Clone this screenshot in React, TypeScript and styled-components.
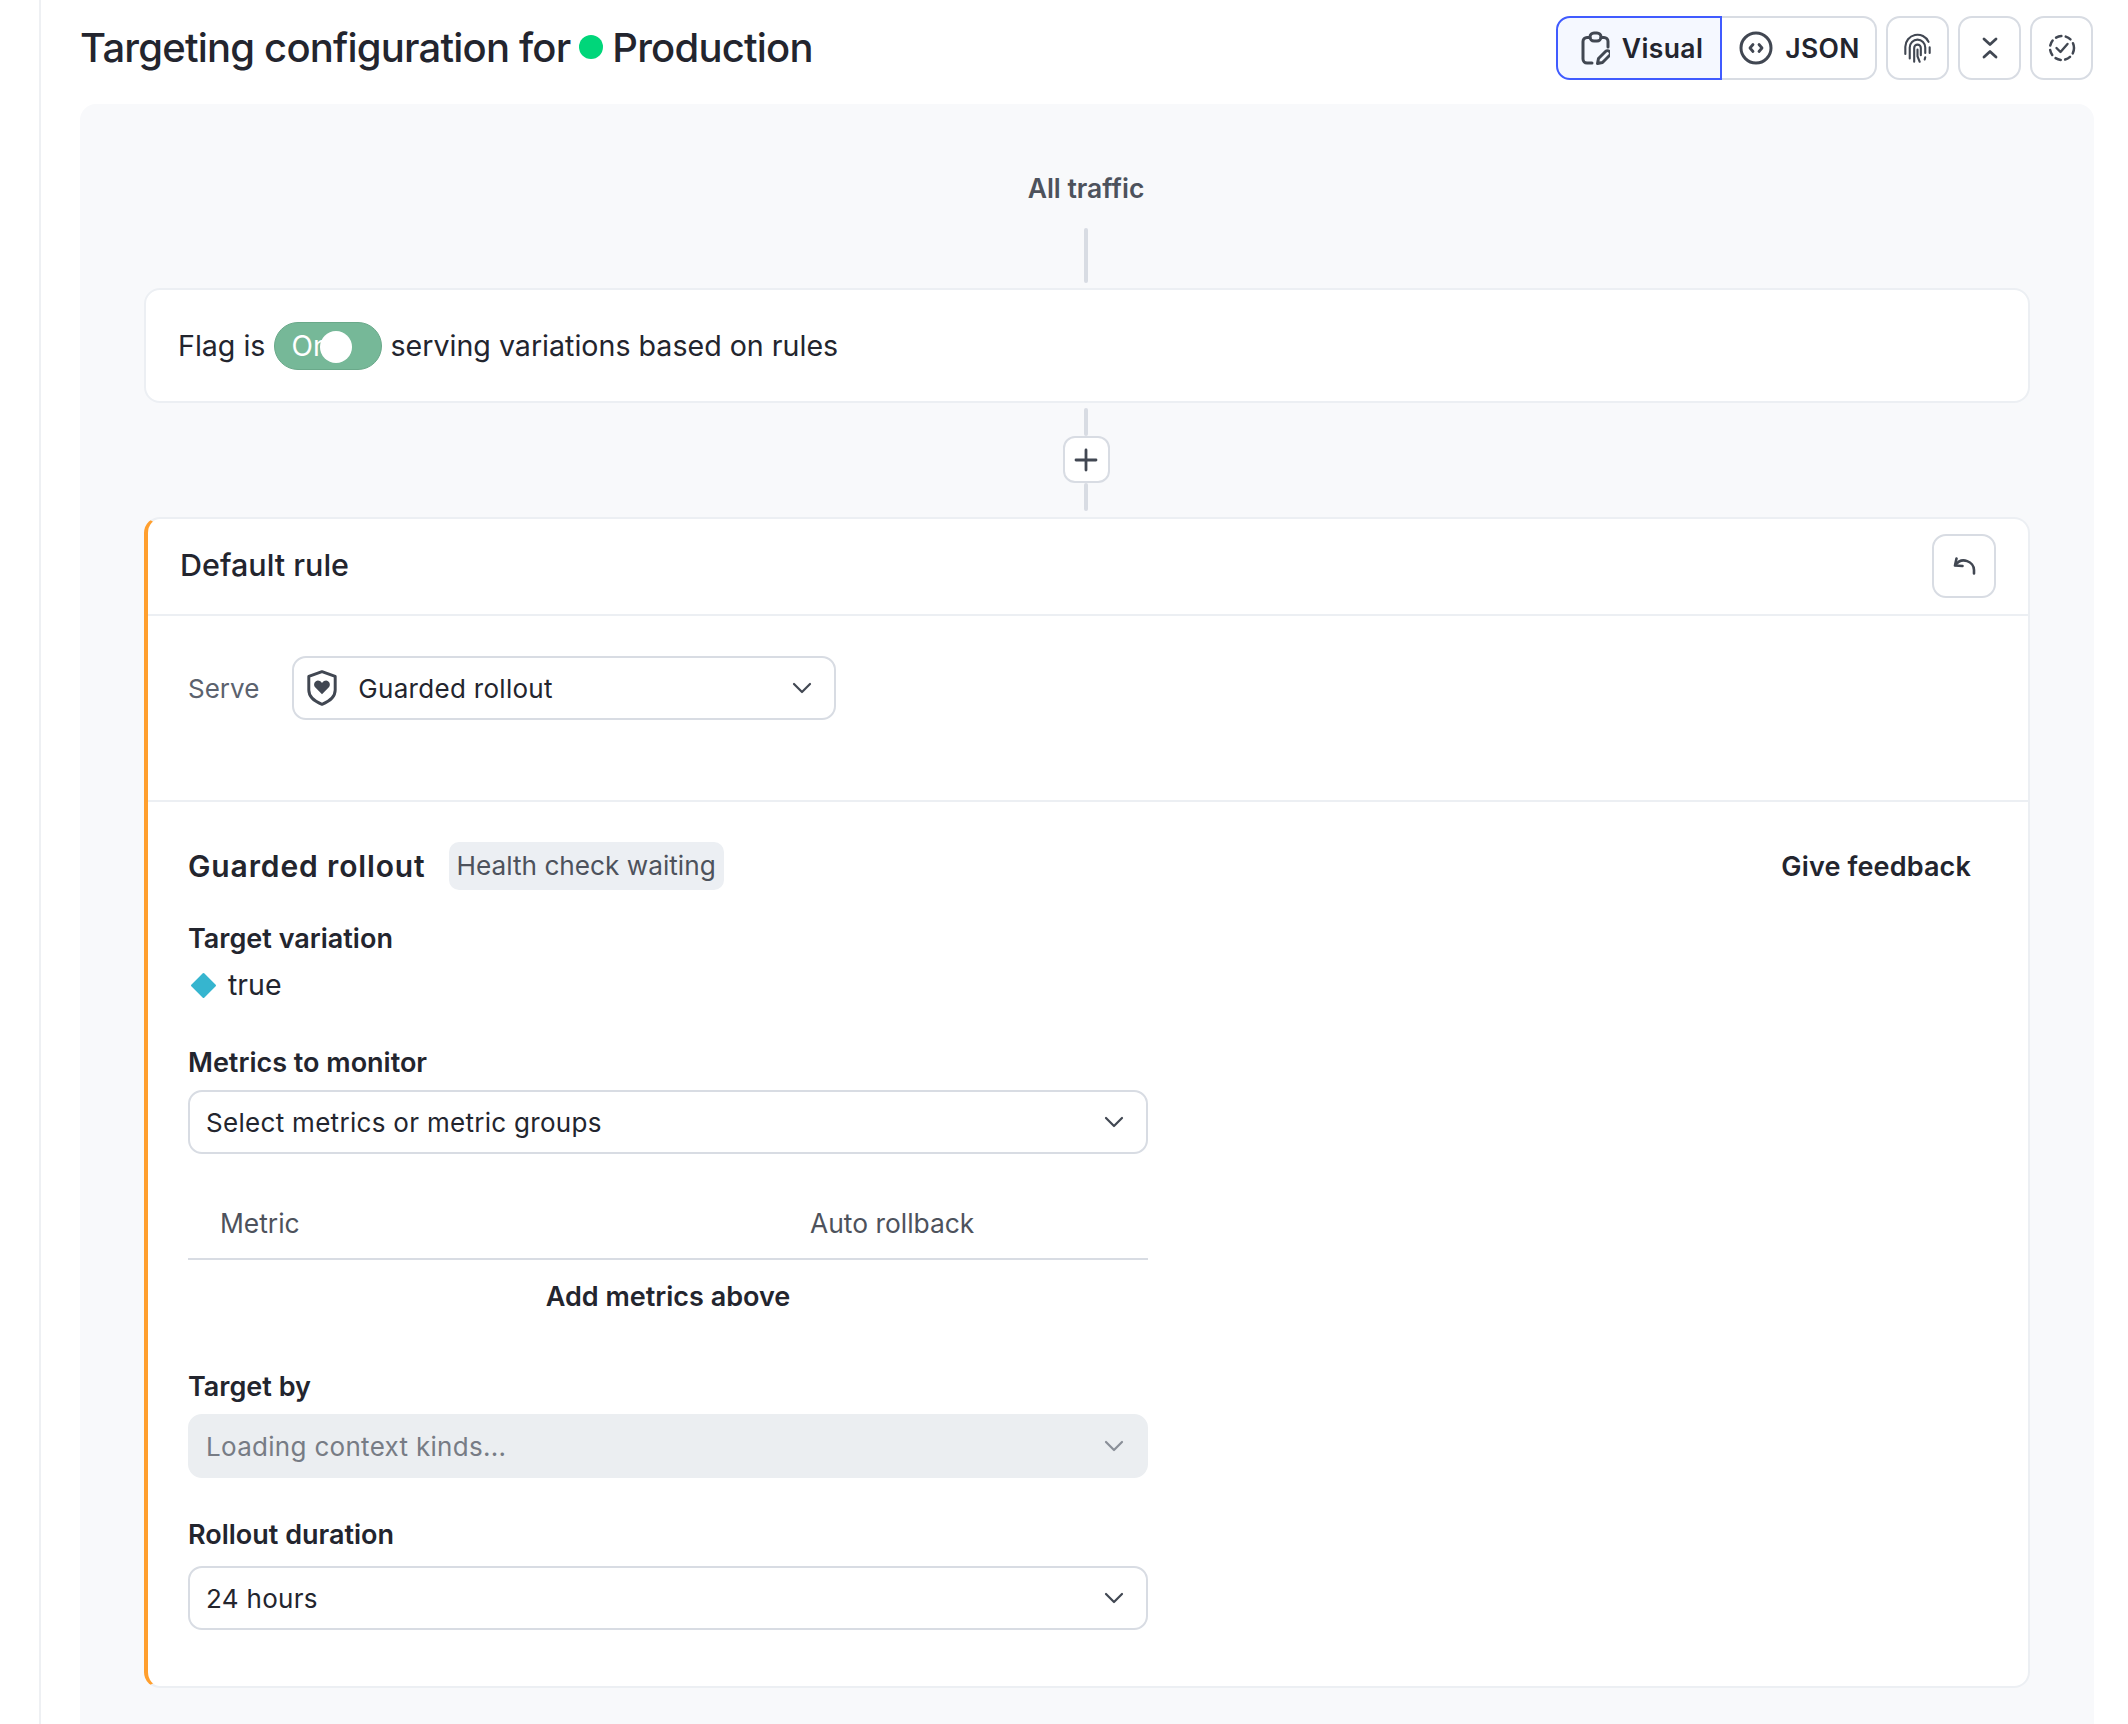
import React from "react";
import styled, { createGlobalStyle } from "styled-components";

const GlobalStyle = createGlobalStyle`
  html, body {
    margin: 0;
    padding: 0;
    background: #fff;
  }

  body {
    font-family: Inter, "Noto Sans", sans-serif;
    color: #23252e;
  }

  * {
    box-sizing: border-box;
  }
`;

const Page = styled.div`
  height: 1724px;
  overflow: hidden;
  margin-left: 39px;
  margin-right: 34px;
  padding-left: 39px;
  padding-top: 16px;
  border-left: 2px solid #eef0f3;
`;

const Header = styled.header`
  display: flex;
  align-items: center;
  justify-content: space-between;
  height: 64px;
`;

const Title = styled.h1`
  display: flex;
  align-items: center;
  margin: 0 0 2px;
  font-size: 40px;
  font-weight: 500;
  letter-spacing: -0.8px;
  color: #23252e;
`;

const EnvDot = styled.span`
  width: 24px;
  height: 24px;
  margin: 0 9px 0 9px;
  border-radius: 50%;
  background: #00d67a;
`;

const Toolbar = styled.div`
  display: flex;
  gap: 9px;
  margin-right: 1px;
`;

const ViewSwitch = styled.div`
  display: flex;
`;

const ViewButton = styled.button<{ $active?: boolean }>`
  display: flex;
  align-items: center;
  justify-content: center;
  gap: 12px;
  height: 64px;
  padding: 0 0 0 ${(p) => (p.$active ? "6px" : "2px")};
  width: ${(p) => (p.$active ? "166px" : "155px")};
  font-family: inherit;
  font-size: 26.5px;
  font-weight: 600;
  letter-spacing: 0.4px;
  color: #23252e;
  background: ${(p) => (p.$active ? "#f5f8ff" : "#fff")};
  border: 2px solid ${(p) => (p.$active ? "#405bff" : "#d8dce3")};
  border-left-width: ${(p) => (p.$active ? "2px" : "0")};
  border-radius: ${(p) => (p.$active ? "14px 0 0 14px" : "0 14px 14px 0")};
`;

const IconButton = styled.button<{ $width?: number }>`
  display: flex;
  align-items: center;
  justify-content: center;
  width: ${(p) => p.$width ?? 63}px;
  height: 64px;
  padding: 0;
  background: #fff;
  border: 2px solid #d8dce3;
  border-radius: 14px;
`;

const Panel = styled.main`
  height: 1640px;
  margin-top: 24px;
  padding: 64px 64px 0 64px;
  background: #f8f9fb;
  border-radius: 16px 16px 0 0;
`;

const AllTraffic = styled.div`
  padding-right: 2px;
  text-align: center;
  font-size: 26.5px;
  font-weight: 600;
  line-height: 40px;
  color: #4d525c;
`;

const Connector = styled.div<{ $height: number; $top: number; $bottom?: number }>`
  width: 4px;
  height: ${(p) => p.$height}px;
  margin: ${(p) => p.$top}px auto ${(p) => p.$bottom ?? 0}px;
  border-radius: 2px;
  background: #d8dce3;
  transform: translateX(-1px);
`;

const FlagCard = styled.section`
  display: flex;
  align-items: center;
  height: 115px;
  padding-left: 32px;
  font-size: 28.6px;
  color: #23252e;
  background: #fff;
  border: 2px solid #eceff3;
  border-radius: 16px;
`;

const Toggle = styled.div`
  position: relative;
  width: 108px;
  height: 48px;
  margin: 0 8px 0 9px;
  padding-left: 16px;
  font-size: 28px;
  line-height: 46px;
  color: #fff;
  background: #76b898;
  border: 1px solid #6aa98a;
  border-radius: 24px;
  overflow: hidden;
`;

const Knob = styled.span`
  position: absolute;
  top: 8px;
  left: 45px;
  width: 32px;
  height: 32px;
  border-radius: 50%;
  background: #fff;
`;

const PlusButton = styled(IconButton)`
  width: 47px;
  height: 47px;
  margin: 0 auto;
  border-radius: 12px;
  transform: translateX(-1px);
`;

const RuleCard = styled.section`
  background: #fff;
  border: 2px solid #eceff3;
  border-left: 4px solid #ff9f2e;
  border-radius: 16px;
`;

const RuleHeader = styled.div`
  display: flex;
  align-items: center;
  justify-content: space-between;
  height: 97px;
  padding: 0 32px 2px 32px;
  border-bottom: 2px solid #eceff3;
`;

const RuleTitle = styled.h2`
  margin: 0 0 2px;
  font-size: 30.5px;
  font-weight: 500;
  color: #23252e;
`;

const ServeRow = styled.div`
  display: flex;
  align-items: center;
  gap: 33px;
  padding: 40px 0 80px 40px;
  border-bottom: 2px solid #eceff3;
`;

const ServeLabel = styled.span`
  font-size: 26px;
  color: #5b626e;
`;

const Select = styled.div<{ $width?: number; $disabled?: boolean }>`
  display: flex;
  align-items: center;
  width: ${(p) => p.$width ?? 960}px;
  height: 64px;
  padding: 0 22px 0 16px;
  font-size: 26px;
  letter-spacing: 0.3px;
  color: ${(p) => (p.$disabled ? "#777c85" : "#23252e")};
  background: ${(p) => (p.$disabled ? "#ebeef1" : "#fff")};
  border: 2px solid ${(p) => (p.$disabled ? "#ebeef1" : "#d8dce3")};
  border-radius: 14px;

  svg:last-child {
    margin-left: auto;
  }
`;

const ServeIcon = styled.svg`
  margin-right: 20px;
  margin-left: -4px;
`;

const RolloutBody = styled.div`
  padding: 40px 57px 56px 40px;
`;

const RolloutHeader = styled.div`
  display: flex;
  align-items: center;
  height: 48px;
`;

const RolloutTitle = styled.h3`
  margin: 0 23px 0 0;
  font-size: 30px;
  font-weight: 600;
  letter-spacing: 0.87px;
  color: #23252e;
`;

const StatusPill = styled.span`
  height: 48px;
  padding: 0 8px;
  font-size: 26.2px;
  line-height: 48px;
  color: #4d525c;
  background: #eceff3;
  border-radius: 10px;
`;

const Feedback = styled.a`
  margin-left: auto;
  font-size: 27px;
  font-weight: 600;
  letter-spacing: 0.15px;
  color: #23252e;
`;

const Label = styled.div<{ $top: number; $bottom: number }>`
  margin: ${(p) => p.$top}px 0 ${(p) => p.$bottom}px;
  font-size: 27px;
  font-weight: 600;
  line-height: 40px;
  color: #23252e;
`;

const VariationRow = styled.div`
  display: flex;
  align-items: center;
  gap: 11px;
  padding-left: 2px;
  font-size: 28.5px;
  line-height: 40px;
`;

const MetricTable = styled.div`
  width: 960px;
  margin-top: 34px;
`;

const MetricHead = styled.div`
  display: grid;
  grid-template-columns: 590px 1fr;
  align-items: center;
  height: 72px;
  padding-left: 32px;
  font-size: 26.4px;
  color: #4d525c;
  border-bottom: 2px solid #d8dce3;
`;

const EmptyRow = styled.div`
  margin-top: 17px;
  text-align: center;
  font-size: 27px;
  font-weight: 600;
  line-height: 40px;
`;

const Chevron = ({ color = "#414752" }: { color?: string }) => (
  <svg width="20" height="12" viewBox="0 0 20 12" fill="none" stroke={color} strokeWidth="2.2" strokeLinecap="round" strokeLinejoin="round">
    <path d="M2 2l8 8 8-8" />
  </svg>
);

const ClipboardIcon = () => (
  <svg width="29" height="35" viewBox="0 0 29 35" fill="none" stroke="#414752" strokeWidth="3" strokeLinecap="round" strokeLinejoin="round">
    <rect x="9" y="2" width="11" height="8" rx="4" />
    <path d="M9 6.5H6a4 4 0 0 0-4 4V28a4 4 0 0 0 4 4h5" />
    <path d="M20 6.5h3a4 4 0 0 1 4 4V16" />
    <path d="M16.5 32.5l1-5 7-7a2.8 2.8 0 0 1 4 4l-7 7z" />
  </svg>
);

const CodeCircleIcon = () => (
  <svg width="34" height="34" viewBox="0 0 34 34" fill="none" stroke="#414752" strokeWidth="3" strokeLinecap="round" strokeLinejoin="round">
    <circle cx="17" cy="17" r="15" />
    <path d="M14 13.5L11 17l3 3.500" strokeWidth="2.800" />
    <path d="M20 13.500l3 3.500-3 3.500" strokeWidth="2.800" />
  </svg>
);

const FingerprintIcon = () => (
  <svg width="29" height="31" viewBox="0 0 26 28" fill="none" stroke="#414752" strokeWidth="1.900" strokeLinecap="round" strokeLinejoin="round">
    <path d="M2 19v-6.500a11 11 0 0 1 21-4.500" />
    <path d="M24 13v5" />
    <path d="M6 23V13a7 7 0 0 1 14 0v5" />
    <path d="M10 26V13.500a3 3 0 0 1 6 0V20" />
    <path d="M13 15v6l2 5" />
    <path d="M20 22l-.5 2" />
  </svg>
);

const CollapseIcon = () => (
  <svg width="16" height="22" viewBox="0 0 16 22" fill="none" stroke="#414752" strokeWidth="2.800" strokeLinecap="round" strokeLinejoin="round">
    <path d="M2 2l6 5.500L14 2" />
    <path d="M2 20l6-5.500L14 20" />
  </svg>
);

const ReviewIcon = () => (
  <svg width="28" height="28" viewBox="0 0 28 28" fill="none" stroke="#414752" strokeLinecap="round" strokeLinejoin="round">
    <circle cx="14" cy="14" r="12" strokeWidth="2.500" strokeDasharray="5.500 4.500" />
    <path d="M8.500 14l4 4 7-8" strokeWidth="2.400" />
  </svg>
);

const UndoIcon = () => (
  <svg width="23" height="18" viewBox="0 0 23 18" fill="none" stroke="#414752" strokeWidth="2.600" strokeLinecap="round" strokeLinejoin="round">
    <path d="M21 16.500V13C21 5 9 -1 2.500 8" />
    <path d="M3.500 1.500L2 8.500l7.500 .5" />
  </svg>
);

const PlusIcon = () => (
  <svg width="24" height="24" viewBox="0 0 24 24" fill="none" stroke="#414752" strokeWidth="2.800" strokeLinecap="round">
    <path d="M12 2v20M2 12h20" />
  </svg>
);

const ShieldIcon = () => (
  <ServeIcon width="32" height="38" viewBox="0 0 30 36" fill="none">
    <path d="M15 2.500L27.500 7v13c0 6.500-6 11-12.500 13.500C8.500 31 2.500 26.500 2.500 20V7z" stroke="#414752" strokeWidth="2.800" strokeLinejoin="round" />
    <path d="M15 24l-6.500-6.700c-2.800-3.300 1-8.200 4.600-5.900 .9 .6 1.500 1.100 1.900 1.900 .4-.8 1-1.300 1.900-1.900 3.600-2.300 7.400 2.600 4.600 5.900z" fill="#414752" />
  </ServeIcon>
);

const DiamondIcon = () => (
  <svg width="27" height="27" viewBox="0 0 27 27">
    <path d="M13.500 2L25 13.500 13.500 25 2 13.500z" fill="#36b5cf" stroke="#36b5cf" strokeWidth="2" strokeLinejoin="round" />
  </svg>
);

const App = () => {
  return (
    <>
      <GlobalStyle />
      <Page>
        <Header>
          <Title>
            Targeting configuration for
            <EnvDot />
            Production
          </Title>
          <Toolbar>
            <ViewSwitch>
              <ViewButton $active>
                <ClipboardIcon />
                Visual
              </ViewButton>
              <ViewButton>
                <CodeCircleIcon />
                JSON
              </ViewButton>
            </ViewSwitch>
            <IconButton>
              <FingerprintIcon />
            </IconButton>
            <IconButton>
              <CollapseIcon />
            </IconButton>
            <IconButton>
              <ReviewIcon />
            </IconButton>
          </Toolbar>
        </Header>
        <Panel>
          <AllTraffic>All traffic</AllTraffic>
          <Connector $top={20} $height={55} $bottom={5} />
          <FlagCard>
            Flag is
            <Toggle>
              On
              <Knob />
            </Toggle>
            serving variations based on rules
          </FlagCard>
          <Connector $top={5} $height={28} />
          <PlusButton>
            <PlusIcon />
          </PlusButton>
          <Connector $top={0} $height={28} $bottom={6} />
          <RuleCard>
            <RuleHeader>
              <RuleTitle>Default rule</RuleTitle>
              <IconButton $width={64}>
                <UndoIcon />
              </IconButton>
            </RuleHeader>
            <ServeRow>
              <ServeLabel>Serve</ServeLabel>
              <Select $width={544}>
                <ShieldIcon />
                Guarded rollout
                <Chevron />
              </Select>
            </ServeRow>
            <RolloutBody>
              <RolloutHeader>
                <RolloutTitle>Guarded rollout</RolloutTitle>
                <StatusPill>Health check waiting</StatusPill>
                <Feedback>Give feedback</Feedback>
              </RolloutHeader>
              <Label $top={29} $bottom={6}>Target variation</Label>
              <VariationRow>
                <DiamondIcon />
                true
              </VariationRow>
              <Label $top={38} $bottom={7}>Metrics to monitor</Label>
              <Select>
                Select metrics or metric groups
                <Chevron />
              </Select>
              <MetricTable>
                <MetricHead>
                  <span>Metric</span>
                  <span>Auto rollback</span>
                </MetricHead>
                <EmptyRow>Add metrics above</EmptyRow>
              </MetricTable>
              <Label $top={50} $bottom={7}>Target by</Label>
              <Select $disabled>
                Loading context kinds...
                <Chevron color="#8a8f98" />
              </Select>
              <Label $top={37} $bottom={11}>Rollout duration</Label>
              <Select>
                24 hours
                <Chevron />
              </Select>
            </RolloutBody>
          </RuleCard>
        </Panel>
      </Page>
    </>
  );
};

export default App;
